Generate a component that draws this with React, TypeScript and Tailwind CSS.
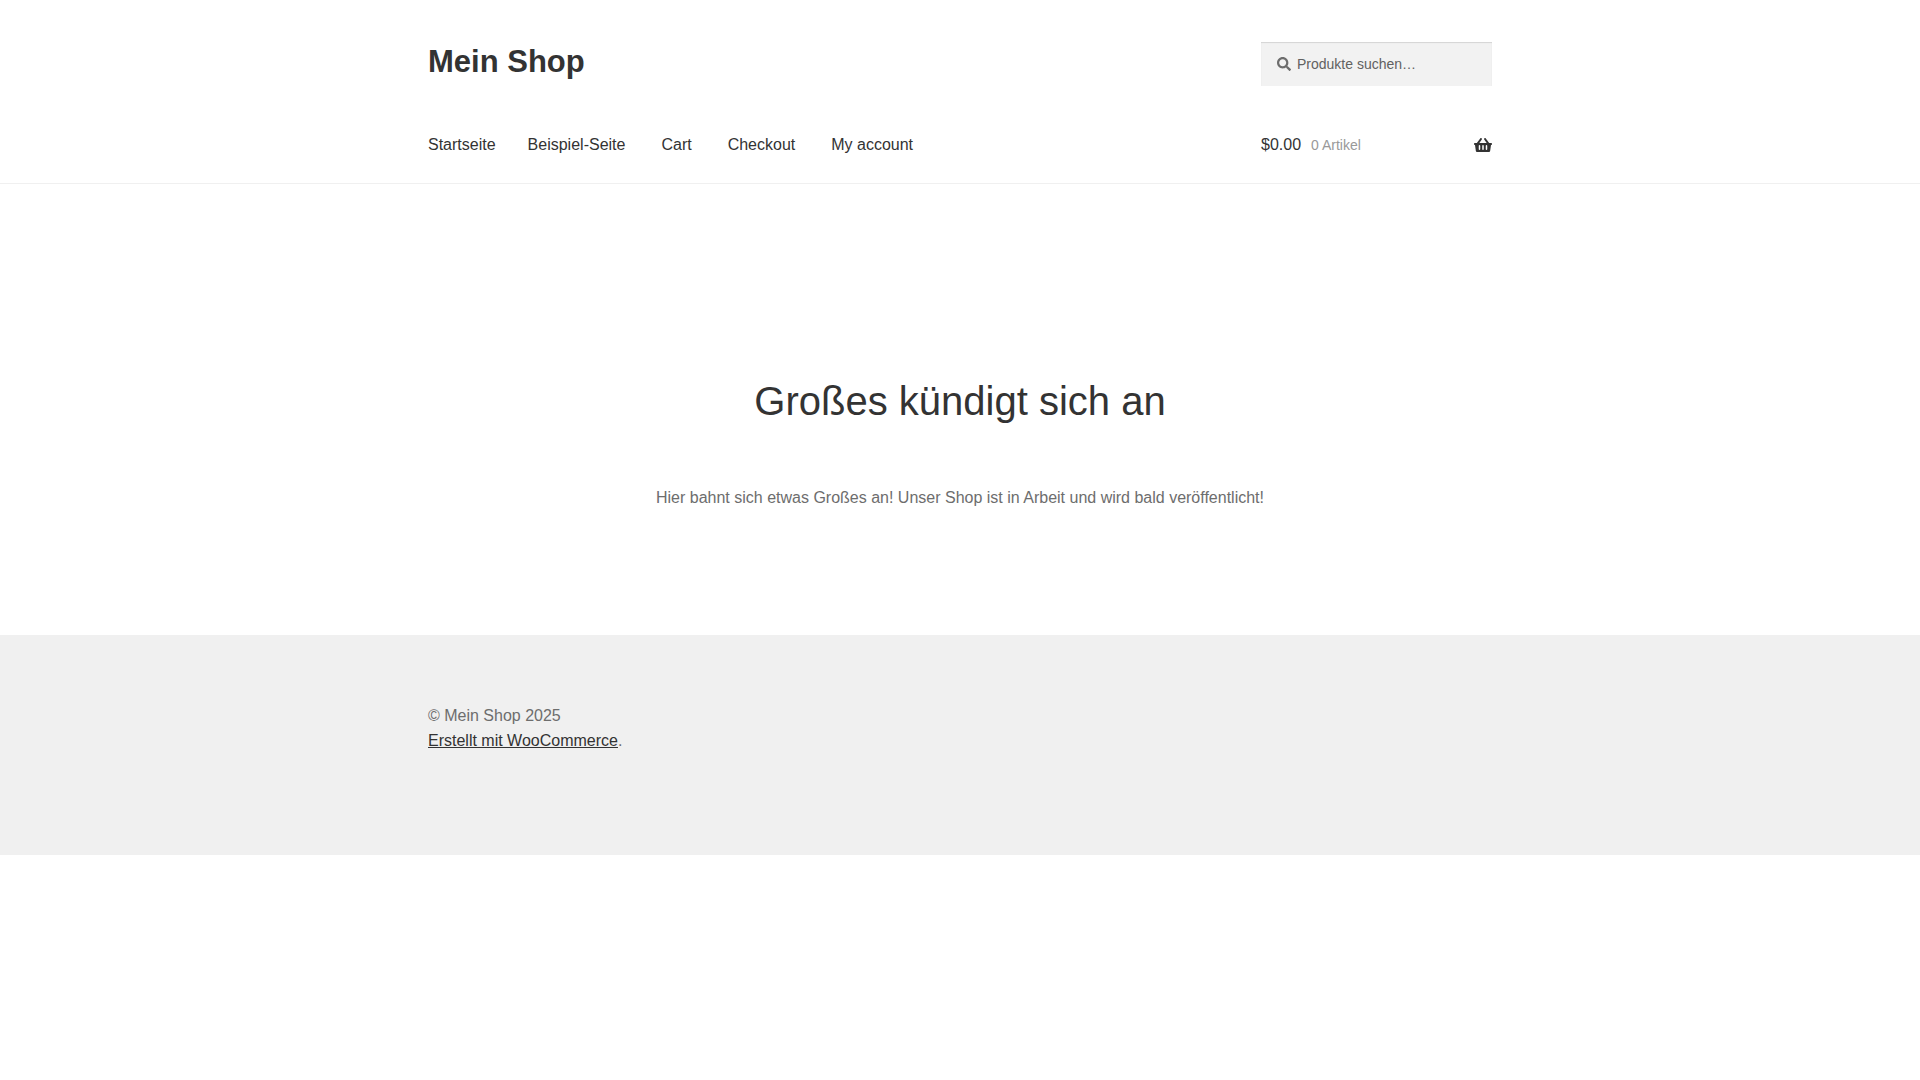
import { useState } from 'react';
import { FaSearch, FaShoppingBasket } from 'react-icons/fa';

const NAV_ITEMS = ['Startseite', 'Beispiel-Seite', 'Cart', 'Checkout', 'My account'];

function Search() {
  const [query, setQuery] = useState('');

  return (
    <form
      role="search"
      onSubmit={(e) => e.preventDefault()}
      className="flex h-11 w-[231px] items-center gap-1.5 bg-[#f2f2f2] px-4 shadow-[inset_0_1px_1px_rgba(0,0,0,0.125)]"
    >
      <label htmlFor="product-search" aria-label="Suche nach">
        <FaSearch className="size-3.5 text-[#6d6d6d]" />
      </label>
      <input
        id="product-search"
        type="search"
        value={query}
        onChange={(e) => setQuery(e.target.value)}
        placeholder="Produkte suchen…"
        className="min-w-0 flex-1 bg-transparent text-sm text-[#43454b] placeholder:text-[#616161]"
      />
    </form>
  );
}

function CartLink() {
  return (
    <a href="#cart" className="flex w-[231px] items-center text-[#333333]">
      <span>$0.00</span>
      <span className="ml-2.5 text-sm text-[#999999]">0 Artikel</span>
      <FaShoppingBasket className="ml-auto size-[18px]" />
    </a>
  );
}

function Header() {
  return (
    <header className="border-b border-[#f0f0f0] pt-[42px]">
      <div className="mx-auto max-w-[1064px]">
        <div className="flex items-start justify-between">
          <a href="#home" className="text-[31px] leading-10 font-bold text-[#333333]">
            Mein Shop
          </a>
          <Search />
        </div>
        <div className="flex items-center justify-between pt-[47px] pb-[26px]">
          <nav aria-label="Hauptnavigation">
            <ul className="flex gap-9 text-[#333333]">
              {NAV_ITEMS.map((item) => (
                <li key={item} className="first:-mr-1">
                  <a href="#page">{item}</a>
                </li>
              ))}
            </ul>
          </nav>
          <CartLink />
        </div>
      </div>
    </header>
  );
}

function Footer() {
  return (
    <footer className="bg-[#f0f0f0]">
      <div className="mx-auto max-w-[1064px] pt-[68px] pb-[102px] leading-[25px]">
        <p>© Mein Shop 2025</p>
        <p>
          <a href="#woocommerce" className="text-[#333333] underline">
            Erstellt mit WooCommerce
          </a>
          .
        </p>
      </div>
    </footer>
  );
}

export default function App() {
  return (
    <div className="bg-white font-['Liberation_Sans',Arial,sans-serif] text-base text-[#6d6d6d]">
      <Header />
      <main className="mx-auto max-w-[1064px] pt-[192px] pb-[124px] text-center">
        <h1 className="text-[40px] leading-[50px] text-[#333333]">Großes kündigt sich an</h1>
        <p className="mt-[59px] leading-[26px]">
          Hier bahnt sich etwas Großes an! Unser Shop ist in Arbeit und wird bald veröffentlicht!
        </p>
      </main>
      <Footer />
    </div>
  );
}
